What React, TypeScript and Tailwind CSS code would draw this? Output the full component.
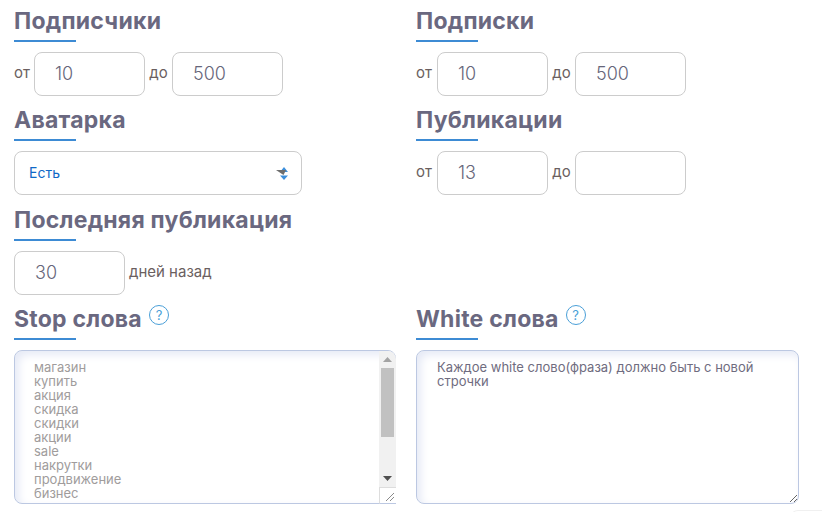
import React from 'react';

const FONT = "font-['Inter','Liberation_Sans',sans-serif]";

const stopWords = [
  'магазин', 'купить', 'акция', 'скидка', 'скидки', 'акции', 'sale', 'накрутки', 'продвижение', 'бизнес',
  'реклама', 'товар', 'доставка', 'заказ', 'цена', 'опт', 'розница', 'бренд', 'услуги', 'продажа',
].join('\n');

const Heading: React.FC<{ title: string; help?: boolean }> = ({ title, help }) => (
  <div className="h-[42px] mb-[10px] flex flex-col">
    <div className="h-[40px] flex items-start gap-[7px]">
      <h2 className="text-[23px] leading-[43px] font-bold tracking-[0.25px] text-[#6a6880] whitespace-nowrap">{title}</h2>
      {help && (
        <span className="mt-[7px] w-[20px] h-[20px] rounded-full border border-[#4a9fd8] text-[#4a9fd8] text-[13px] leading-[18px] text-center">
          ?
        </span>
      )}
    </div>
    <div className="w-[62px] h-[2px] bg-[#3d8bd4]" />
  </div>
);

const NumberInput: React.FC<{ value?: string }> = ({ value }) => (
  <input
    defaultValue={value}
    className="w-[111px] h-[44px] pl-[20px] pb-[2px] border border-[#cccccc] rounded-[8px] text-[18px] font-light text-[#66667a] bg-white outline-none"
  />
);

const Range: React.FC<{ from: string; to?: string; right?: boolean }> = ({ from, to, right }) => (
  <div className="flex items-center text-[15px] text-[#6b5f5f]">
    <span className={right ? 'w-[21px] pb-[1px]' : 'w-[20px] pb-[1px]'}>от</span>
    <NumberInput value={from} />
    <span className="w-[27px] text-center pb-[1px]">до</span>
    <NumberInput value={to} />
  </div>
);

const FakeScrollbar: React.FC = () => (
  <div className="absolute right-0 top-[1px] bottom-0 w-[17px] flex flex-col bg-[#f1f1f1] rounded-tr-[8px]">
    <svg className="mt-[6px] ml-[4px] shrink-0" width="9" height="5" viewBox="0 0 9 5">
      <path d="M4.5 0 L9 5 H0 Z" fill="#a3a3a3" />
    </svg>
    <div className="mt-[6px] ml-[2px] w-[13px] h-[69px] bg-[#c1c1c1]" />
    <svg className="mt-[39px] ml-[4px] shrink-0" width="9" height="5" viewBox="0 0 9 5">
      <path d="M0 0 H9 L4.5 5 Z" fill="#505050" />
    </svg>
    <div className="mt-auto h-[17px] bg-white border-l border-t border-[#dddddd] border-b-[#bcc8e2] border-b relative">
      <svg className="absolute right-[1px] bottom-[1px]" width="10" height="10" viewBox="0 0 10 10">
        <path d="M1 9 L9 1 M5 9 L9 5" stroke="#8a8a8a" strokeWidth="1" />
      </svg>
    </div>
  </div>
);

const App: React.FC = () => {
  return (
    <div className={`${FONT} w-[822px] h-[512px] overflow-hidden bg-white pl-[14px]`}>
      <div className="grid grid-cols-[402px_1fr]">
        {/* Left column */}
        <div>
          <Heading title="Подписчики" />
          <Range from="10" to="500" />
          <div className="mt-[3px]">
            <Heading title="Аватарка" />
          </div>
          <div className="relative w-[288px]">
            <select className="w-full h-[44px] pl-[14px] pb-[2px] appearance-none border border-[#cccccc] rounded-[8px] text-[14px] text-[#0f68c6] bg-white outline-none">
              <option>Есть</option>
            </select>
            <svg className="absolute left-[262px] top-[16px]" width="13" height="14" viewBox="0 0 13 14">
              <path d="M8 0 L12 5 H4 Z M4 8.5 H12 L8 13 Z" fill="#3d8fdc" />
              <path d="M0 3 H10 L7.5 8 Z" fill="#6e6e6e" />
            </svg>
          </div>
          <div className="mt-[4px]">
            <Heading title="Последняя публикация" />
          </div>
          <div className="flex items-center text-[15px] text-[#6b5f5f]">
            <NumberInput value="30" />
            <span className="ml-[4px] pb-[2px]">дней назад</span>
          </div>
          <div className="mt-[3px]">
            <Heading title="Stop слова" help />
          </div>
          <div className="relative w-[382px]">
            <textarea
              defaultValue={stopWords}
              className="block w-full h-[154px] pl-[19px] pt-[9px] text-[13px] leading-[14px] text-[#a09c9c] border border-[#bcc8e2] rounded-[8px] outline-none overflow-hidden shadow-[inset_4px_4px_8px_#e6eaf6]"
            />
            <FakeScrollbar />
          </div>
        </div>

        {/* Right column */}
        <div>
          <Heading title="Подписки" />
          <Range from="10" to="500" right />
          <div className="mt-[3px]">
            <Heading title="Публикации" />
          </div>
          <Range from="13" right />
          <div className="h-[96px] mt-[4px]" />
          <div className="mt-[3px]">
            <Heading title="White слова" help />
          </div>
          <textarea
            defaultValue={'Каждое white слово(фраза) должно быть с новой\nстрочки'}
            className="block w-[383px] h-[154px] pl-[20px] pt-[9px] text-[13px] leading-[14px] text-[#6f6c80] border border-[#bcc8e2] rounded-[8px] outline-none shadow-[inset_4px_4px_8px_#e6eaf6]"
          />
          {/* top edge of the next block, cut off by the window */}
          <div className="mt-[6px] ml-[374px] h-[10px] border-t border-l border-[#f0f0f0] rounded-tl-[8px]" />
        </div>
      </div>
    </div>
  );
};

export default App;
